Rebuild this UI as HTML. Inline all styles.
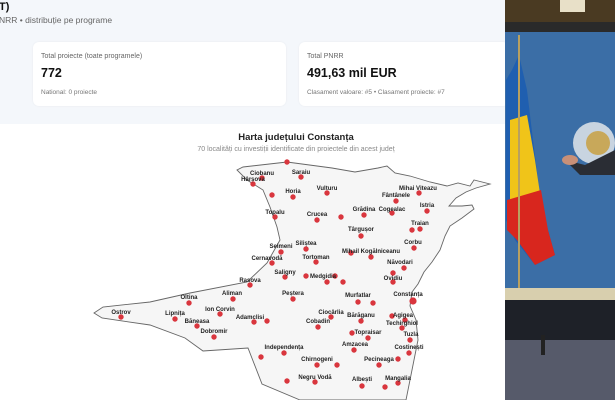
<!DOCTYPE html>
<html><head><meta charset="utf-8"><style>
*{margin:0;padding:0;box-sizing:border-box}
body{width:615px;height:400px;overflow:hidden;font-family:"Liberation Sans",sans-serif;background:#fff;position:relative}
.top{position:absolute;left:0;top:0;width:505px;height:124px;background:#f4f7fb}
.card{position:absolute;top:42px;height:64px;background:#fff;border-radius:6px;box-shadow:0 0 2px rgba(0,0,0,.06)}
.cl{position:absolute;left:8px;top:11px;font-size:7px;color:#666}
.cv{position:absolute;left:8px;top:24px;font-size:12.5px;font-weight:bold;color:#111}
.cs{position:absolute;left:8px;top:47px;font-size:6.5px;color:#777}
svg text{font-family:"Liberation Sans",sans-serif}
</style></head><body>
<div class="top"></div>
<div style="position:absolute;left:-1px;top:1px;font-size:11px;font-weight:bold;color:#111">T)</div>
<div style="position:absolute;left:-1px;top:15px;font-size:8.5px;color:#666">NRR • distribuție pe programe</div>
<div class="card" style="left:33px;width:253px"><div class="cl">Total proiecte (toate programele)</div><div class="cv">772</div><div class="cs">National: 0 proiecte</div></div>
<div class="card" style="left:299px;width:210px"><div class="cl">Total PNRR</div><div class="cv">491,63 mil EUR</div><div class="cs">Clasament valoare: #5 • Clasament proiecte: #7</div></div>
<div style="position:absolute;left:0;top:132px;width:592px;text-align:center;font-size:9.5px;font-weight:bold;color:#222">Harta județului Constanța</div>
<div style="position:absolute;left:0;top:146px;width:592px;text-align:center;font-size:7px;color:#888">70 localități cu investiții identificate din proiectele din acest județ</div>
<svg style="position:absolute;left:0;top:0" width="505" height="400">
<path d="M243,167 L287,162 L332,168 L355,172 L378,168 L387,166 L395,173 L410,176 L430,182 L447,186 L458,183 L470,186 L474,180 L490,184 L476,188 L466,192 L456,198 L449,206 L462,206 L472,205 L474,209 L462,218 L450,226 L445,236 L440,250 L432,262 L424,272 L418,284 L412,292 L410,306 L416,320 L418,340 L414,360 L410,380 L406,400 L300,400 L262,384 L248,348 L203,351 L185,338 L150,325 L102,318 L94,313 L103,307 L150,302 L190,293 L247,282 L267,263 L280,240 L277,227 L270,207 L263,190 L247,180 L237,170 Z" fill="#f6f6f6" stroke="#666" stroke-width="0.9"/>
<g fill="#d9363e">
<circle cx="287" cy="162" r="2.7"/><circle cx="262" cy="178" r="2.7"/><circle cx="253" cy="184" r="2.7"/><circle cx="301" cy="177" r="2.7"/><circle cx="272" cy="195" r="2.7"/><circle cx="293" cy="197" r="2.7"/><circle cx="327" cy="193" r="2.7"/><circle cx="275" cy="217" r="2.7"/><circle cx="317" cy="220" r="2.7"/><circle cx="341" cy="217" r="2.7"/><circle cx="364" cy="215" r="2.7"/><circle cx="392" cy="213" r="2.7"/><circle cx="419" cy="193" r="2.7"/><circle cx="396" cy="201" r="2.7"/><circle cx="427" cy="211" r="2.7"/><circle cx="420" cy="229" r="2.7"/><circle cx="412" cy="230" r="2.7"/><circle cx="361" cy="236" r="2.7"/><circle cx="414" cy="248" r="2.7"/><circle cx="306" cy="249" r="2.7"/><circle cx="281" cy="252" r="2.7"/><circle cx="351" cy="253" r="2.7"/><circle cx="371" cy="257" r="2.7"/><circle cx="316" cy="262" r="2.7"/><circle cx="272" cy="263" r="2.7"/><circle cx="404" cy="268" r="2.7"/><circle cx="285" cy="277" r="2.7"/><circle cx="306" cy="276" r="2.7"/><circle cx="327" cy="282" r="2.7"/><circle cx="335" cy="276" r="2.7"/><circle cx="343" cy="282" r="2.7"/><circle cx="393" cy="273" r="2.7"/><circle cx="393" cy="282" r="2.7"/><circle cx="250" cy="285" r="2.7"/><circle cx="233" cy="299" r="2.7"/><circle cx="293" cy="299" r="2.7"/><circle cx="358" cy="302" r="2.7"/><circle cx="373" cy="303" r="2.7"/><circle cx="413" cy="301" r="3.6"/><circle cx="189" cy="303" r="2.7"/><circle cx="121" cy="317" r="2.7"/><circle cx="220" cy="314" r="2.7"/><circle cx="175" cy="319" r="2.7"/><circle cx="197" cy="326" r="2.7"/><circle cx="254" cy="322" r="2.7"/><circle cx="267" cy="321" r="2.7"/><circle cx="214" cy="337" r="2.7"/><circle cx="331" cy="317" r="2.7"/><circle cx="318" cy="327" r="2.7"/><circle cx="361" cy="321" r="2.7"/><circle cx="392" cy="316" r="2.7"/><circle cx="405" cy="320" r="2.7"/><circle cx="402" cy="328" r="2.7"/><circle cx="352" cy="333" r="2.7"/><circle cx="368" cy="338" r="2.7"/><circle cx="410" cy="340" r="2.7"/><circle cx="284" cy="353" r="2.7"/><circle cx="261" cy="357" r="2.7"/><circle cx="354" cy="350" r="2.7"/><circle cx="409" cy="353" r="2.7"/><circle cx="317" cy="365" r="2.7"/><circle cx="337" cy="365" r="2.7"/><circle cx="379" cy="365" r="2.7"/><circle cx="398" cy="359" r="2.7"/><circle cx="315" cy="382" r="2.7"/><circle cx="287" cy="381" r="2.7"/><circle cx="362" cy="386" r="2.7"/><circle cx="398" cy="383" r="2.7"/><circle cx="385" cy="387" r="2.7"/>
</g>
<g font-size="6" font-weight="bold" fill="#222" text-anchor="middle">
<text x="262" y="175">Ciobanu</text><text x="253" y="181">Hârșova</text><text x="301" y="174">Saraiu</text><text x="293" y="193">Horia</text><text x="327" y="190">Vulturu</text><text x="275" y="214">Topalu</text><text x="317" y="216">Crucea</text><text x="364" y="211">Grădina</text><text x="392" y="211">Cogealac</text><text x="418" y="190">Mihai Viteazu</text><text x="396" y="197">Fântânele</text><text x="427" y="207">Istria</text><text x="420" y="225">Traian</text><text x="361" y="231">Târgușor</text><text x="413" y="244">Corbu</text><text x="306" y="245">Siliștea</text><text x="281" y="248">Seimeni</text><text x="371" y="253">Mihail Kogălniceanu</text><text x="316" y="259">Tortoman</text><text x="267" y="260">Cernavodă</text><text x="400" y="264">Năvodari</text><text x="285" y="274">Saligny</text><text x="323" y="278">Medgidia</text><text x="393" y="280">Ovidiu</text><text x="250" y="282">Rasova</text><text x="232" y="295">Aliman</text><text x="293" y="295">Peștera</text><text x="358" y="297">Murfatlar</text><text x="408" y="296">Constanța</text><text x="189" y="299">Oltina</text><text x="121" y="314">Ostrov</text><text x="220" y="311">Ion Corvin</text><text x="175" y="315">Lipnița</text><text x="197" y="323">Băneasa</text><text x="250" y="319">Adamclisi</text><text x="214" y="333">Dobromir</text><text x="331" y="314">Ciocârlia</text><text x="318" y="323">Cobadin</text><text x="361" y="317">Bărăganu</text><text x="403" y="317">Agigea</text><text x="402" y="325">Techirghiol</text><text x="368" y="334">Topraisar</text><text x="411" y="336">Tuzla</text><text x="284" y="349">Independența</text><text x="355" y="346">Amzacea</text><text x="409" y="349">Costinești</text><text x="317" y="361">Chirnogeni</text><text x="379" y="361">Pecineaga</text><text x="315" y="379">Negru Vodă</text><text x="362" y="381">Albești</text><text x="398" y="380">Mangalia</text>
</g>
</svg>
<svg style="position:absolute;left:505px;top:0" width="110" height="400">
<rect width="110" height="400" fill="#3b6ea6"/>
<rect width="110" height="32" fill="#4a3a22"/>
<rect x="55" y="0" width="25" height="12" fill="#e8e0c8"/>
<rect y="22" width="110" height="10" fill="#2a2a2a"/>
<polygon points="7,70 14,55 22,90 28,140 35,195 43,230 50,255 30,265 10,240 1,220 1,80" fill="#1f5fb0"/>
<polygon points="5,120 22,115 30,160 36,200 20,210 5,205" fill="#f0c419"/>
<polygon points="2,200 36,190 43,230 50,255 30,265 12,240 2,230" fill="#d8261e"/>
<rect x="13" y="35" width="2" height="260" fill="#b8a060"/>
<rect x="0" y="288" width="110" height="12" fill="#d8cfae"/>
<rect x="0" y="300" width="110" height="40" fill="#1e2128"/>
<rect x="0" y="340" width="110" height="60" fill="#565a6a"/>
<circle cx="89" cy="143" r="21" fill="#c8d4e0"/>
<circle cx="93" cy="143" r="12" fill="#c8a85a"/>
<path d="M60,160 L80,165 L110,150 L110,175 L75,175 Z" fill="#2a2d34"/>
<ellipse cx="65" cy="160" rx="8" ry="5" fill="#c89078"/>
<rect x="36" y="335" width="4" height="20" fill="#222"/>
</svg>
</body></html>
